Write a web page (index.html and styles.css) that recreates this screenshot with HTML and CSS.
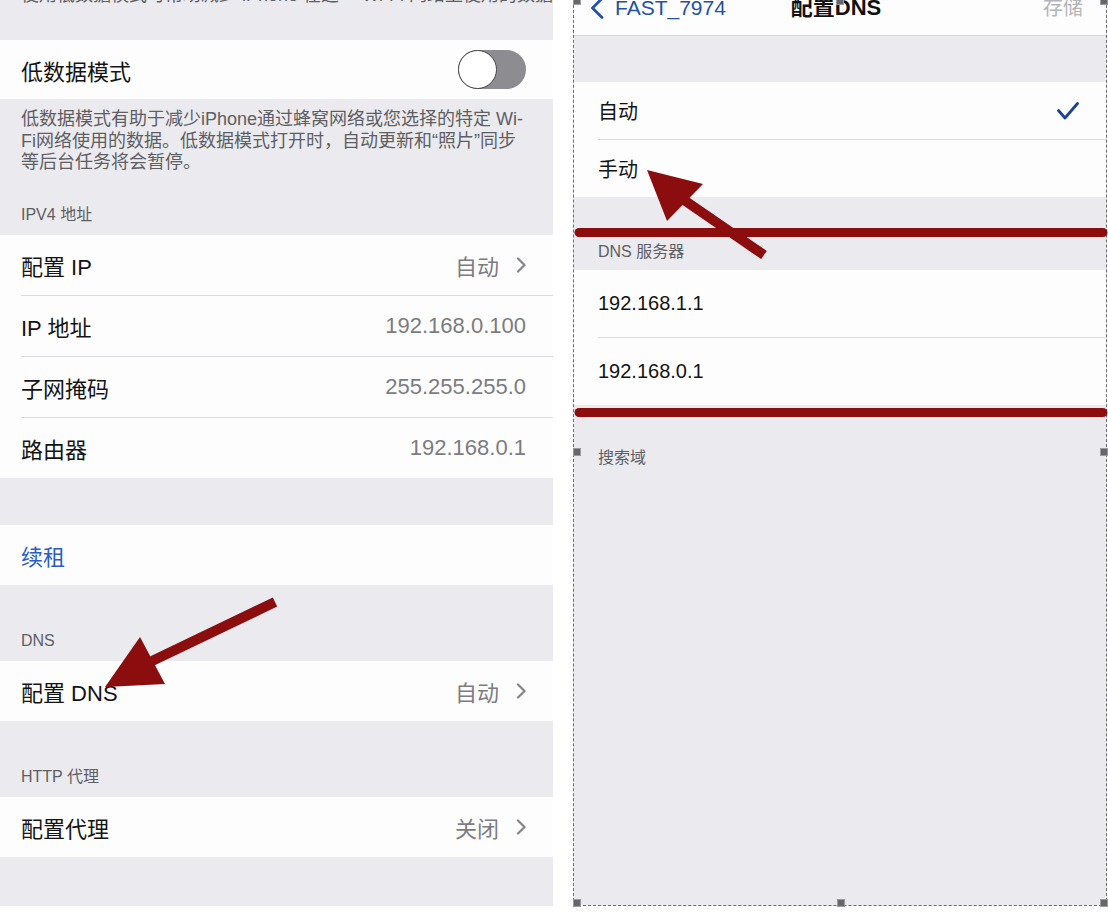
FILE: index.html
```html
<!DOCTYPE html>
<html lang="zh-CN">
<head>
  <meta charset="UTF-8">
  <title>配置 DNS</title>
  <link rel="stylesheet" href="styles.css">
</head>
<body>
  <div class="page">

    <!-- 左：Wi-Fi 详情 -->
    <div class="left">
      <div class="footer clipped">
        <p>使用低数据模式可帮助减少 iPhone 在这一 Wi-Fi 网络上使用的数据。</p>
      </div>

      <div class="group">
        <div class="cell first toggle-row">
          <span>低数据模式</span>
          <span class="switch"><span class="knob"></span></span>
        </div>
      </div>

      <div class="footer desc">
        <p>低数据模式有助于减少iPhone通过蜂窝网络或您选择的特定 Wi-<br>Fi网络使用的数据。低数据模式打开时，自动更新和“照片”同步<br>等后台任务将会暂停。</p>
        <div class="head">IPV4 地址</div>
      </div>

      <div class="group">
        <div class="cell first">
          <span>配置 IP</span>
          <span class="value">自动<svg class="chev" width="10" height="16" viewBox="0 0 10 16"><path d="M2 1.5 L8.5 8 L2 14.5"/></svg></span>
        </div>
        <div class="cell">
          <span>IP 地址</span>
          <span class="value">192.168.0.100</span>
        </div>
        <div class="cell">
          <span>子网掩码</span>
          <span class="value">255.255.255.0</span>
        </div>
        <div class="cell">
          <span>路由器</span>
          <span class="value">192.168.0.1</span>
        </div>
      </div>

      <div class="spacer s47"></div>

      <div class="group">
        <div class="cell first link">续租</div>
      </div>

      <div class="section-head">DNS</div>

      <div class="group">
        <div class="cell first">
          <span>配置 DNS</span>
          <span class="value">自动<svg class="chev" width="10" height="16" viewBox="0 0 10 16"><path d="M2 1.5 L8.5 8 L2 14.5"/></svg></span>
        </div>
      </div>

      <div class="section-head">HTTP 代理</div>

      <div class="group">
        <div class="cell first">
          <span>配置代理</span>
          <span class="value">关闭<svg class="chev" width="10" height="16" viewBox="0 0 10 16"><path d="M2 1.5 L8.5 8 L2 14.5"/></svg></span>
        </div>
      </div>

      <div class="spacer s49"></div>
    </div>

    <!-- 右：配置 DNS -->
    <div class="right">
      <div class="nav">
        <div class="back">
          <svg width="16" height="22" viewBox="0 0 16 22"><path d="M13 1.5 L3.5 11 L13 20.5"/></svg>
          <span>FAST_7974</span>
        </div>
        <div class="title">配置DNS</div>
        <div class="save">存储</div>
      </div>

      <div class="spacer s46"></div>

      <div class="group">
        <div class="rcell first">
          <span>自动</span>
          <svg class="check" width="22" height="18" viewBox="0 0 22 18"><path d="M1.5 8.5 L8 16 L20.5 1.5"/></svg>
        </div>
        <div class="rcell">
          <span>手动</span>
        </div>
      </div>

      <div class="section-head r">DNS 服务器</div>

      <div class="group">
        <div class="rcell first tall">192.168.1.1</div>
        <div class="rcell tall">192.168.0.1</div>
      </div>

      <div class="search-head">搜索域</div>
    </div>

    <!-- 选框控制点 -->
    <span class="handle" style="left:573px;top:-3px"></span>
    <span class="handle" style="left:836px;top:-3px"></span>
    <span class="handle" style="left:1100px;top:-3px"></span>
    <span class="handle" style="left:573px;top:448px"></span>
    <span class="handle" style="left:1100px;top:448px"></span>
    <span class="handle" style="left:573px;top:899px"></span>
    <span class="handle" style="left:837px;top:899px"></span>
    <span class="handle" style="left:1100px;top:899px"></span>

    <!-- 标注 -->
    <svg class="marks" width="1108" height="912" viewBox="0 0 1108 912">
      <line x1="579" y1="232.5" x2="1103" y2="232.5" />
      <line x1="579" y1="412.5" x2="1103" y2="412.5" />
      <line class="shaft" x1="275" y1="602" x2="150" y2="662" />
      <polygon points="105,687 140,637 165,684" />
      <line class="shaft" x1="764" y1="255" x2="684" y2="200" />
      <polygon points="647,170 703,184 667,221" />
    </svg>
  </div>
</body>
</html>
```

FILE: styles.css
```css
* {
  box-sizing: border-box;
}

body {
  margin: 0;
  background: #fff;
  color: #141414;
  font-family: "Liberation Sans", "Noto Sans CJK SC", sans-serif;
}

.page {
  position: relative;
  display: flex;
  gap: 20px;
  width: 1108px;
  height: 912px;
  overflow: hidden;
}

.left {
  width: 553px;
  display: flex;
  flex-direction: column;
}

.footer, .spacer, .section-head {
  background: #eaeaef;
  color: #5e5e63;
}

.footer p {
  margin: 0;
  padding-left: 21px;
  font-size: 18px;
  line-height: 21.5px;
  white-space: nowrap;
}

.clipped {
  height: 40px;
  overflow: hidden;
}

.clipped p {
  margin-top: -15px;
}

.desc {
  height: 136px;
  padding-top: 10px;
}

.desc .head {
  margin-top: 31px;
  padding-left: 21px;
  font-size: 16px;
  line-height: 20px;
}

.s46 { height: 46px; }
.s47 { height: 47px; }
.s49 { height: 49px; }

.section-head {
  height: 76px;
  display: flex;
  align-items: flex-end;
  padding: 0 0 10px 21px;
  font-size: 16px;
  line-height: 20px;
}

.group {
  background: #fdfdfd;
}

.cell {
  height: 61px;
  margin-left: 21px;
  padding-right: 27px;
  border-top: 1px solid #dcdce0;
  display: flex;
  align-items: center;
  justify-content: space-between;
  font-size: 22px;
}

.cell.first {
  height: 60px;
  border-top: none;
}

.cell.toggle-row {
  height: 59px;
}

.cell.link {
  color: #2b5cc4;
}

.value {
  display: flex;
  align-items: center;
  gap: 17px;
  color: #7c7c81;
}

.chev path {
  fill: none;
  stroke: #85858a;
  stroke-width: 2.2;
  stroke-linecap: round;
  stroke-linejoin: round;
}

.switch {
  display: flex;
  width: 68px;
  height: 39px;
  border-radius: 20px;
  background: #8c8c91;
}

.knob {
  width: 39px;
  height: 39px;
  border-radius: 50%;
  border: 1.5px solid #45454a;
  background: #fff;
}

/* 右侧面板 */
.right {
  width: 534px;
  height: 906px;
  display: flex;
  flex-direction: column;
  background: #eaeaef;
  border: 1px dashed #6c6c70;
  border-top: none;
}

.nav {
  height: 36px;
  display: grid;
  grid-template-columns: 1fr auto 1fr;
  align-items: start;
  padding: 0 23px 0 15px;
  background: #fdfdfd;
  border-bottom: 1px solid #d8d8dc;
  line-height: 26px;
}

.nav > div {
  margin-top: -5px;
}

.back {
  display: flex;
  align-items: center;
  gap: 10px;
  color: #2350a8;
  font-size: 21px;
}

.back path {
  fill: none;
  stroke: #2350a8;
  stroke-width: 2.8;
  stroke-linecap: round;
  stroke-linejoin: round;
}

.title {
  font-size: 22px;
  font-weight: bold;
  color: #111;
}

.save {
  justify-self: end;
  font-size: 20px;
  color: #b4b4b9;
}

.rcell {
  height: 58px;
  margin-left: 24px;
  padding-right: 27px;
  border-top: 1px solid #dcdce0;
  display: flex;
  align-items: center;
  justify-content: space-between;
  font-size: 20px;
}

.rcell.first {
  height: 57px;
  border-top: none;
}

.rcell.tall {
  height: 68px;
}

.rcell.tall.first {
  height: 67px;
}

.check path {
  fill: none;
  stroke: #1d409c;
  stroke-width: 2.8;
  stroke-linecap: round;
  stroke-linejoin: round;
}

.section-head.r {
  height: 73px;
  padding: 0 0 8px 24px;
}

.search-head {
  padding: 43px 0 0 24px;
  font-size: 16px;
  line-height: 20px;
  color: #5e5e63;
}

.handle {
  position: absolute;
  width: 8px;
  height: 8px;
  background: #66666b;
  border: 1px solid #9a9aa0;
}

.marks {
  position: absolute;
  top: 0;
  left: 0;
  pointer-events: none;
}

.marks line {
  stroke: #8c0d0d;
  stroke-width: 9;
  stroke-linecap: round;
}

.marks line.shaft {
  stroke-width: 10;
  stroke-linecap: butt;
}

.marks polygon {
  fill: #8c0d0d;
}
```
